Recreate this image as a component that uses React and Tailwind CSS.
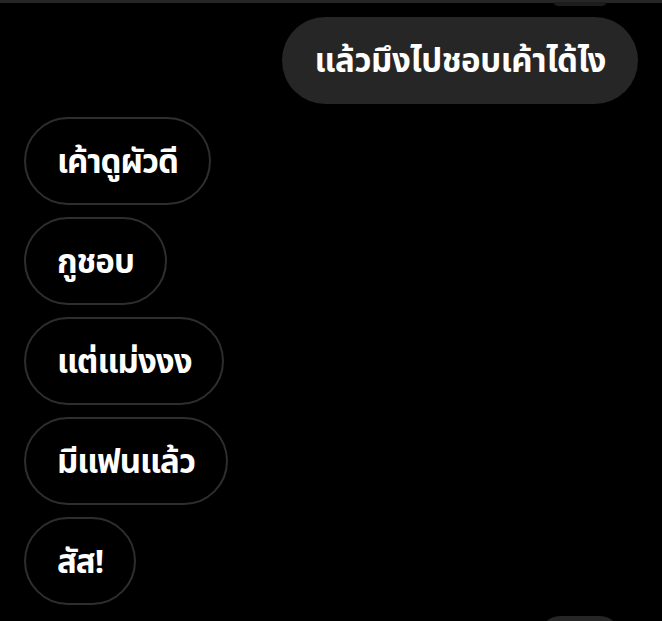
import React from "react";

const theirMessages = ["เค้าดูผัวดี", "กูชอบ", "แต่แม่งงง", "มีแฟนแล้ว", "สัส!"];

const App = () => {
  return (
    <div
      className="relative h-[621px] w-[662px] overflow-hidden bg-black text-white"
      style={{ fontFamily: '"Noto Sans Thai", "Noto Sans", sans-serif' }}
    >
      {/* top edge of previous screen */}
      <div className="h-[3px] bg-[#262626]" />
      <div className="absolute right-[56px] top-[2px] h-[4px] w-[52px] rounded-b-full bg-[#1c1c1c]" />

      <div className="flex flex-col gap-[13px] px-[24px] pt-[14px]">
        {/* ---------- MY MESSAGE ---------- */}
        <div className="flex justify-end">
          <div className="flex h-[87px] items-center rounded-full bg-[#262626] px-[32px] pt-[5px] text-[33px] font-bold tracking-[-0.4px]">
            แล้วมึงไปชอบเค้าได้ไง
          </div>
        </div>

        {/* ---------- THEIR MESSAGES ---------- */}
        <div className="flex flex-col items-start gap-[12px]">
          {theirMessages.map((msg, i) => (
            <div
              key={i}
              className="flex h-[88px] items-center rounded-full border-2 border-[#2e2e2e] px-[31px] pt-[5px] text-[33px] font-bold tracking-[-1px]"
            >
              {msg}
            </div>
          ))}
        </div>
      </div>

      {/* next bubble peeking in */}
      <div className="absolute right-[42px] top-[616px] h-[40px] w-[80px] rounded-full bg-[#262626]" />
    </div>
  );
};

export default App;
